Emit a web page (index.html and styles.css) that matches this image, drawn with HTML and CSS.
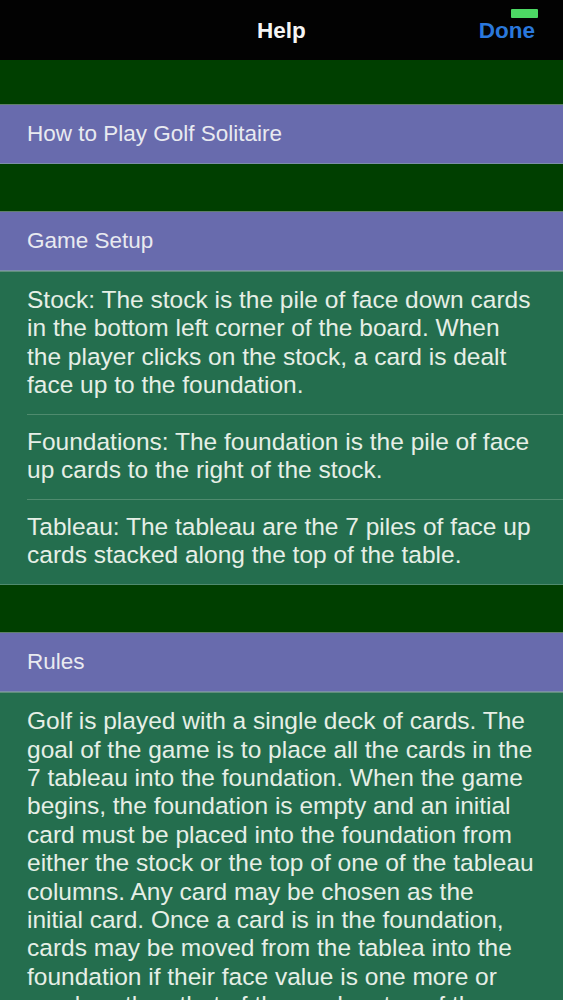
FILE: index.html
```html
<!DOCTYPE html>
<html lang="en">
<head>
    <meta charset="UTF-8">
    <meta name="viewport" content="width=device-width, initial-scale=1.0">
    <title>Help</title>
    <link rel="stylesheet" href="styles.css">
</head>
<body>
    <div class="navbar">
        <div class="nav-title">Help</div>
        <div class="nav-done">Done</div>
        <div class="status-bar"></div>
    </div>

    <div class="table">
        <div class="spacer first"></div>
        <div class="section-header">How to Play Golf Solitaire</div>

        <div class="spacer"></div>
        <div class="section-header">Game Setup</div>
        <div class="cell">Stock: The stock is the pile of face down cards in the bottom left corner of the board. When the player clicks on the stock, a card is dealt face up to the foundation.</div>
        <div class="cell">Foundations: The foundation is the pile of face up cards to the right of the stock.</div>
        <div class="cell last">Tableau: The tableau are the 7 piles of face up cards stacked along the top of the table.</div>

        <div class="spacer"></div>
        <div class="section-header">Rules</div>
        <div class="cell">Golf is played with a single deck of cards. The goal of the game is to place all the cards in the 7 tableau into the foundation. When the game begins, the foundation is empty and an initial card must be placed into the foundation from either the stock or the top of one of the tableau columns. Any card may be chosen as the initial card. Once a card is in the foundation, cards may be moved from the tablea into the foundation if their face value is one more or one less than that of the card on top of the foundation.</div>
    </div>
</body>
</html>
```

FILE: styles.css
```css
* {
    margin: 0;
    padding: 0;
    box-sizing: border-box;
}

body {
    font-family: "Liberation Sans", Arial, sans-serif;
    background: #003f00;
    width: 563px;
    height: 1000px;
    overflow: hidden;
}

.navbar {
    height: 60px;
    background: #020202;
    display: flex;
    align-items: center;
    justify-content: center;
    position: relative;
}

.nav-title {
    color: #f4f4f4;
    font-size: 22.5px;
    font-weight: 700;
    margin-top: 1px;
}

.nav-done {
    position: absolute;
    right: 28px;
    top: 18px;
    color: #2a78dc;
    font-size: 22.5px;
    font-weight: 700;
}

/* green indicator that sits over the Done button */
.status-bar {
    position: absolute;
    left: 511px;
    top: 9px;
    width: 27px;
    height: 9px;
    background: #4cd964;
    border-radius: 1px;
}

.spacer {
    height: 48px;
    background: #003f00;
    border-bottom: 1px solid #5f7f6a;
}

.spacer.first {
    height: 45px;
}

.section-header {
    height: 59px;
    background: #686bad;
    color: #e8eaf0;
    font-size: 22.5px;
    padding: 0 27px;
    display: flex;
    align-items: center;
    border-bottom: 1px solid #7b8fa8;
}

.cell {
    background: #246e4e;
    color: #e6efe6;
    font-size: 24.5px;
    line-height: 28.4px;
    padding: 14px 28px 14.3px 27px;
    position: relative;
}

.cell + .cell::before {
    content: "";
    position: absolute;
    left: 27px;
    right: 0;
    top: 0;
    height: 1px;
    background: #4f8b6e;
}

.cell.last {
    border-bottom: 1px solid #4f8b6e;
}

.section-header + .cell {
    border-top: 1px solid #5f8f7a;
}
```
